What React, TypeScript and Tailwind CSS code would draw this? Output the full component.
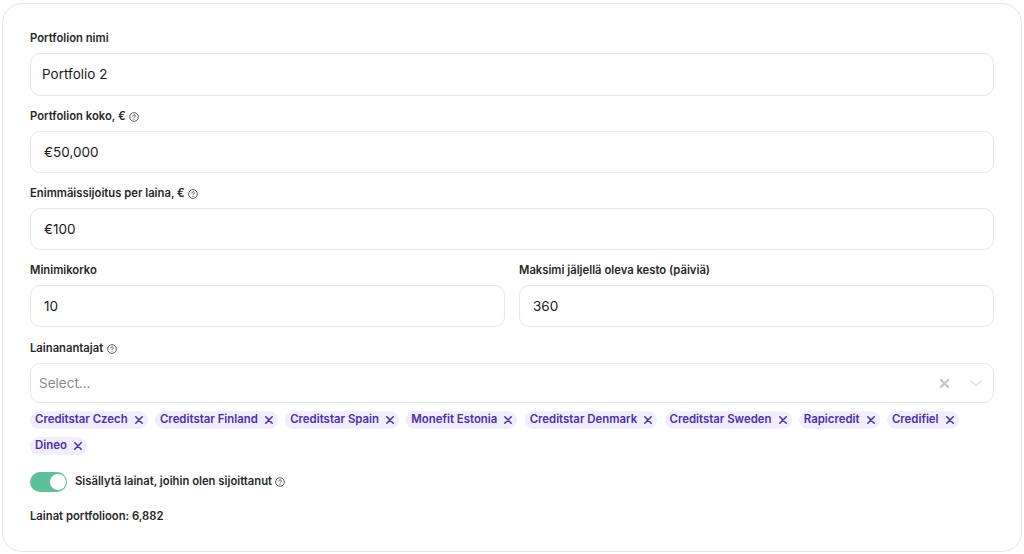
const lenders = [
  "Creditstar Czech",
  "Creditstar Finland",
  "Creditstar Spain",
  "Monefit Estonia",
  "Creditstar Denmark",
  "Creditstar Sweden",
  "Rapicredit",
  "Credifiel",
  "Dineo",
];

function Help() {
  return (
    <svg width="10" height="10" viewBox="0 0 12 12" fill="none" stroke="#3f3f46" strokeWidth="1" className="shrink-0">
      <circle cx="6" cy="6" r="5.2" />
      <path d="M4.6 4.7a1.45 1.45 0 1 1 2.2 1.25C6.3 6.25 6 6.5 6 7.1" strokeLinecap="round" />
      <circle cx="6" cy="8.7" r="0.6" fill="#3f3f46" stroke="none" />
    </svg>
  );
}

function Cross({ size = 8, weight = 1.5 }: { size?: number; weight?: number }) {
  return (
    <svg width={size} height={size} viewBox="0 0 8 8" fill="none" stroke="currentColor" strokeWidth={weight} strokeLinecap="round" className="shrink-0">
      <path d="M0.8 0.8l6.4 6.4M7.2 0.8L0.8 7.2" />
    </svg>
  );
}

function Field({ label, value, help, pad = "px-[13px]", box = "h-[42px]" }: { label: string; value: string; help?: boolean; pad?: string; box?: string }) {
  return (
    <div className="flex flex-col min-w-0">
      <div className="h-[15px] flex items-center gap-[3px] text-[11.25px] font-semibold text-[#27272a] leading-none">
        {label}
        {help && <Help />}
      </div>
      <div className={`mt-[7px] rounded-[10px] border border-[#e7e7ea] bg-white flex items-center text-[13.5px] text-[#18181b] ${box} ${pad}`}>
        {value}
      </div>
    </div>
  );
}

export default function App() {
  return (
    <div className="w-[1024px] h-[554px] bg-white overflow-hidden pt-[3px] pl-[2px] pr-[2px] font-['Inter',sans-serif]">
      <div className="h-[549px] rounded-[20px] border border-[#e5e5e8] pt-[27px] pl-[27px] pr-[27px] flex flex-col">
        <Field label="Portfolion nimi" value="Portfolio 2" pad="px-[11px]" box="h-[43px]" />
        <div className="mt-[13px]">
          <Field label="Portfolion koko, €" value="€50,000" help />
        </div>
        <div className="mt-[13px]">
          <Field label="Enimmäissijoitus per laina, €" value="€100" help />
        </div>
        <div className="mt-[13px] grid grid-cols-2 gap-[14px]">
          <Field label="Minimikorko" value="10" />
          <Field label="Maksimi jäljellä oleva kesto (päiviä)" value="360" />
        </div>
        <div className="mt-[14px] h-[15px] flex items-center gap-[4px] text-[11.25px] font-semibold text-[#27272a] leading-none">
          Lainanantajat
          <Help />
        </div>
        <div className="mt-[7px] h-[40px] rounded-[10px] border border-[#e7e7ea] bg-white flex items-center pl-[8px] pr-[11px] text-[13.5px] text-[#8a8a8f]">
          <span className="flex-1">Select...</span>
          <span className="text-[#c4c4c7] mr-[21px]">
            <Cross size={9} weight={1.9} />
          </span>
          <svg width="12" height="7" viewBox="0 0 12 7" fill="none" stroke="#c4c4c7" strokeWidth="0.9" className="shrink-0">
            <path d="M0.5 0.7L6 6l5.5-5.3" />
          </svg>
        </div>
        <div className="mt-[8px] flex flex-wrap gap-x-[7.3px] gap-y-[8px] w-[950px]">
          {lenders.map((l) => (
            <span key={l} className="h-[18px] rounded-[9px] bg-[#f1edfc] pl-[5px] pr-[5px] flex items-center gap-[7px] text-[11.4px] font-semibold text-[#4c2fa8] leading-none">
              {l}
              <Cross />
            </span>
          ))}
        </div>
        <div className="mt-[17px] flex items-center gap-[8px] text-[11.25px] font-semibold text-[#27272a] leading-none">
          <div className="w-[37px] h-[20px] rounded-full bg-[#5cc09a] flex items-center justify-end pr-[1.5px]">
            <div className="w-[16px] h-[16px] rounded-full bg-white" />
          </div>
          <span className="flex items-center gap-[3px]">
            Sisällytä lainat, joihin olen sijoittanut
            <Help />
          </span>
        </div>
        <div className="mt-[19px] text-[11.25px] font-semibold text-[#27272a] leading-none">Lainat portfolioon: 6,882</div>
      </div>
    </div>
  );
}
